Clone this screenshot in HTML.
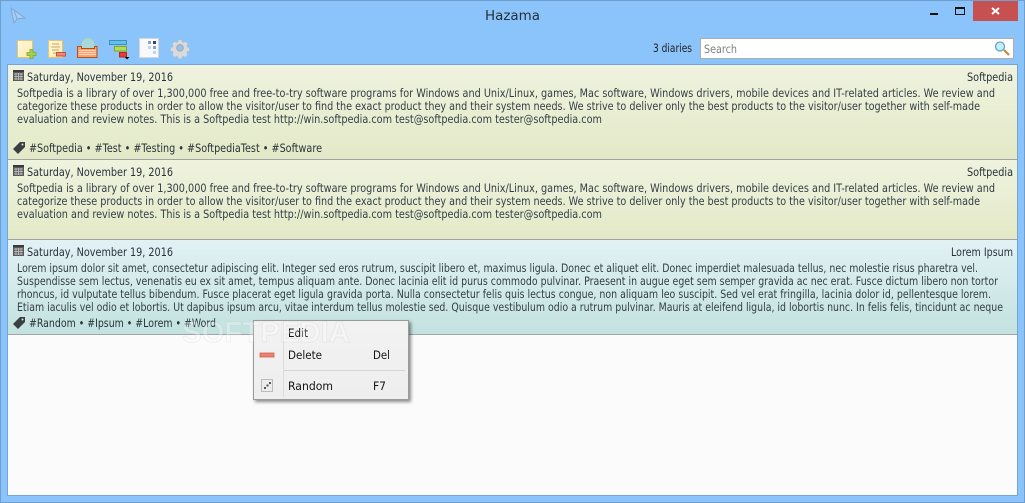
<!DOCTYPE html>
<html><head><meta charset="utf-8"><title>Hazama</title>
<style>
html,body{margin:0;padding:0;background:#8ac4fb;}
svg{display:block;position:absolute;left:0;top:0;}
text{font-family:"DejaVu Sans","Liberation Sans",sans-serif;font-size:11.5px;fill:#333e46;}
.d{fill:#28323a;}
.k{fill:#141414;}
</style></head>
<body>
<svg width="1025" height="503" viewBox="0 0 1025 503" xmlns="http://www.w3.org/2000/svg">
<defs>
<linearGradient id="g1" x1="0" y1="0" x2="0" y2="1"><stop offset="0" stop-color="#eff3df"/><stop offset="1" stop-color="#e3e9c7"/></linearGradient>
<linearGradient id="g2" x1="0" y1="0" x2="0" y2="1"><stop offset="0" stop-color="#e2f1f5"/><stop offset="1" stop-color="#c2e2df"/></linearGradient>
<linearGradient id="note" x1="0" y1="0" x2="1" y2="1"><stop offset="0" stop-color="#fff8e0"/><stop offset="1" stop-color="#fde9a8"/></linearGradient>
<linearGradient id="menu" x1="0" y1="0" x2="0" y2="1"><stop offset="0" stop-color="#f2f2f2"/><stop offset="1" stop-color="#eeeeee"/></linearGradient>
<filter id="sh" x="-10%" y="-10%" width="125%" height="125%"><feDropShadow dx="2" dy="2" stdDeviation="1.5" flood-color="#000" flood-opacity=".45"/></filter>
</defs>
<rect width="1025" height="503" fill="#8ac4fb"/>
<rect x=".5" y=".5" width="1024" height="502" fill="none" stroke="#6f9fcf"/>

<!-- title bar -->
<path d="M11 8 L25 18 L17 19 L14 23 Z" fill="#a9cdf0" stroke="#7fa8d2" stroke-width="1"/>
<path d="M14 10 L17 19" stroke="#7fa8d2" fill="none"/>
<text x="485" y="20" textLength="55" lengthAdjust="spacingAndGlyphs" style="font-size:13px;fill:#26303a">Hazama</text>
<rect x="930" y="13" width="8" height="2" fill="#111"/>
<rect x="955.5" y="7.5" width="9" height="7" fill="none" stroke="#111"/><rect x="955" y="7" width="10" height="2" fill="#111"/>
<rect x="973" y="1" width="45" height="20" fill="#c75050"/>
<path d="M992 8 L999 14 M999 8 L992 14" stroke="#fff" stroke-width="2"/>

<!-- toolbar -->
<rect x="17.5" y="40.5" width="15" height="17" fill="url(#note)" stroke="#e8c566"/>
<path d="M30 49.500h3v3h3v3h-3v3h-3v-3h-3v-3h3z" fill="#a8d050" stroke="#7ea52a" stroke-width=".8"/>
<rect x="48.5" y="40.5" width="14" height="17" fill="url(#note)" stroke="#e8c566"/>
<path d="M52 44h7M51 47h9M52 50h7M53 53h4" stroke="#c4a868" fill="none"/>
<rect x="56.5" y="52.5" width="9" height="3.5" fill="#ee8878" stroke="#c84f3f"/>
<path d="M81 46a6.500 8 0 0 1 14 0v3H81z" fill="#a8d8d8" stroke="#8cc0c2" stroke-width=".5"/>
<path d="M77.500 46.500h4v2h13v-2h2.500v11H77.500z" fill="#f4a070" stroke="#bd4f14"/>
<path d="M79 50.500h17M79 52.500h17M79 54.500h17" stroke="#fbd6b8" fill="none"/>
<rect x="109.500" y="40.500" width="17" height="4" fill="#64c0e8" stroke="#3e8fb8"/>
<rect x="114.500" y="46.500" width="12" height="4.500" fill="#b4dc58" stroke="#7ea52a"/>
<rect x="119.500" y="52.500" width="7" height="4.500" fill="#ee3a2c" stroke="#b22a1c"/>
<path d="M124.500 57h5l-2.500 2.500z" fill="#111"/>
<rect x="139.500" y="38.500" width="19" height="19" fill="#f8f9fb" stroke="#d4d6de"/>
<rect x="148" y="41" width="3" height="3" fill="#8ea4c4"/><rect x="153" y="41" width="3" height="3" fill="#2f4668"/>
<rect x="148" y="46" width="3" height="3" fill="#c4d4ec"/><rect x="153" y="46" width="3" height="3" fill="#8ea4c4"/>
<rect x="153" y="51" width="3" height="3" fill="#c4d4ec"/>
<g transform="translate(180 48) scale(.8) translate(-179.500 -49)">
<path d="M177.500 39h4l.6 2.500 2 .8 2.300-1.300 2.800 2.800-1.300 2.300.8 2 2.500.6v4l-2.500.6-.8 2 1.300 2.300-2.800 2.800-2.300-1.300-2 .8-.6 2.500h-4l-.6-2.500-2-.8-2.300 1.300-2.800-2.800 1.300-2.300-.8-2-2.500-.6v-4l2.500-.6.8-2-1.300-2.300 2.800-2.800 2.300 1.300 2-.8z" fill="#d8dadc" stroke="#bcbec0" stroke-width=".6"/>
<circle cx="179.500" cy="48.800" r="4" fill="#8ac4fb" stroke="#a8aaac" stroke-width="1.500"/>
</g>

<text class="k" x="653" y="52" textLength="39" lengthAdjust="spacingAndGlyphs" style="fill:#222">3 diaries</text>
<rect x="700" y="38" width="313" height="20" fill="#fff" stroke="#adadad" stroke-width="1" transform="translate(.5 .5)"/>
<text x="704" y="53" textLength="33" lengthAdjust="spacingAndGlyphs" style="fill:#808080">Search</text>
<circle cx="1000" cy="46.500" r="4.500" fill="#c8ecf8" stroke="#5aa6d0" stroke-width="1.300"/>
<path d="M1004 50 L1009 55" stroke="#c88838" stroke-width="2.200"/>

<!-- list -->
<rect x="8" y="65" width="1009" height="430" fill="#fbfbfb"/>
<rect x="8" y="65" width="1009" height="94" fill="url(#g1)"/>
<rect x="8" y="160" width="1009" height="79" fill="url(#g1)"/>
<rect x="8" y="240" width="1009" height="94" fill="url(#g2)"/>
<rect x="8" y="159" width="1009" height="1" fill="#a0a4a4"/>
<rect x="8" y="239" width="1009" height="1" fill="#a0a4a4"/>
<rect x="8" y="334" width="1009" height="1" fill="#a0a4a4"/>
<path d="M7.500 495.500V64.500H1017.500V495.500Z" fill="none" stroke="#72a4d6"/>

<!-- entry 1 -->
<g id="cal1"><rect x="13" y="70" width="11" height="11" fill="#5a5a5a"/><rect x="13" y="70" width="11" height="2" fill="#3a3a3a"/><path d="M14 74h9M14 76.500h9M14 79h9M16 73v7M18.500 73v7M21 73v7" stroke="#c8c8c8" stroke-width=".8" fill="none"/></g>
<text class="d" x="27" y="81" textLength="146" lengthAdjust="spacingAndGlyphs">Saturday, November 19, 2016</text>
<text class="d" x="967" y="81" textLength="46" lengthAdjust="spacingAndGlyphs">Softpedia</text>
<text x="17" y="97" textLength="978" lengthAdjust="spacingAndGlyphs">Softpedia is a library of over 1,300,000 free and free-to-try software programs for Windows and Unix/Linux, games, Mac software, Windows drivers, mobile devices and IT-related articles. We review and</text>
<text x="17" y="110" textLength="963" lengthAdjust="spacingAndGlyphs">categorize these products in order to allow the visitor/user to find the exact product they and their system needs. We strive to deliver only the best products to the visitor/user together with self-made</text>
<text x="17" y="123" textLength="585" lengthAdjust="spacingAndGlyphs">evaluation and review notes. This is a Softpedia test http://win.softpedia.com test@softpedia.com tester@softpedia.com</text>
<path d="M13 149 L20 142 H25 V147 L18 154 Z" fill="#3a3f42"/><circle cx="22.500" cy="144.500" r="1" fill="#e8edd0"/>
<text class="d" x="29" y="152" textLength="293" lengthAdjust="spacingAndGlyphs">#Softpedia • #Test • #Testing • #SoftpediaTest • #Software</text>

<!-- entry 2 -->
<use href="#cal1" y="95"/>
<text class="d" x="27" y="176" textLength="146" lengthAdjust="spacingAndGlyphs">Saturday, November 19, 2016</text>
<text class="d" x="967" y="176" textLength="46" lengthAdjust="spacingAndGlyphs">Softpedia</text>
<text x="17" y="192" textLength="978" lengthAdjust="spacingAndGlyphs">Softpedia is a library of over 1,300,000 free and free-to-try software programs for Windows and Unix/Linux, games, Mac software, Windows drivers, mobile devices and IT-related articles. We review and</text>
<text x="17" y="205" textLength="963" lengthAdjust="spacingAndGlyphs">categorize these products in order to allow the visitor/user to find the exact product they and their system needs. We strive to deliver only the best products to the visitor/user together with self-made</text>
<text x="17" y="218" textLength="585" lengthAdjust="spacingAndGlyphs">evaluation and review notes. This is a Softpedia test http://win.softpedia.com test@softpedia.com tester@softpedia.com</text>

<!-- entry 3 -->
<use href="#cal1" y="175"/>
<text class="d" x="27" y="256" textLength="146" lengthAdjust="spacingAndGlyphs">Saturday, November 19, 2016</text>
<text class="d" x="951" y="256" textLength="62" lengthAdjust="spacingAndGlyphs">Lorem Ipsum</text>
<text x="17" y="272" textLength="961" lengthAdjust="spacingAndGlyphs">Lorem ipsum dolor sit amet, consectetur adipiscing elit. Integer sed eros rutrum, suscipit libero et, maximus ligula. Donec et aliquet elit. Donec imperdiet malesuada tellus, nec molestie risus pharetra vel.</text>
<text x="17" y="285" textLength="981" lengthAdjust="spacingAndGlyphs">Suspendisse sem lectus, venenatis eu ex sit amet, tempus aliquam ante. Donec lacinia elit id purus commodo pulvinar. Praesent in augue eget sem semper gravida ac nec erat. Fusce dictum libero non tortor</text>
<text x="17" y="298" textLength="974" lengthAdjust="spacingAndGlyphs">rhoncus, id vulputate tellus bibendum. Fusce placerat eget ligula gravida porta. Nulla consectetur felis quis lectus congue, non aliquam leo suscipit. Sed vel erat fringilla, lacinia dolor id, pellentesque lorem.</text>
<text x="17" y="311" textLength="986" lengthAdjust="spacingAndGlyphs">Etiam iaculis vel odio et lobortis. Ut dapibus ipsum arcu, vitae interdum tellus molestie sed. Quisque vestibulum odio a rutrum pulvinar. Mauris at eleifend ligula, id lobortis nunc. In felis felis, tincidunt ac neque</text>
<path d="M13 324 L20 317 H25 V322 L18 329 Z" fill="#3a3f42"/><circle cx="22.500" cy="319.500" r="1" fill="#d4ecec"/>
<text class="d" x="29" y="327" textLength="187" lengthAdjust="spacingAndGlyphs">#Random • #Ipsum • #Lorem • #Word</text>

<!-- context menu -->
<rect x="253.500" y="320.500" width="155" height="79" fill="url(#menu)" stroke="#9a9a9a" filter="url(#sh)"/>
<path d="M283.500 322V397" stroke="#dcdcdc"/>
<path d="M284 370.500H405" stroke="#d4d4d4"/>
<text class="k" x="288" y="337" textLength="20" lengthAdjust="spacingAndGlyphs">Edit</text>
<text class="k" x="288" y="359" textLength="34" lengthAdjust="spacingAndGlyphs">Delete</text>
<text class="k" x="373" y="359" textLength="17" lengthAdjust="spacingAndGlyphs">Del</text>
<text class="k" x="288" y="390" textLength="45" lengthAdjust="spacingAndGlyphs">Random</text>
<text class="k" x="373" y="390" textLength="13" lengthAdjust="spacingAndGlyphs">F7</text>
<rect x="260" y="353" width="14" height="4" fill="#ee8070" stroke="#d0604c" stroke-width=".8"/>
<rect x="261.500" y="379.500" width="11" height="12" fill="#ececec" stroke="#bcbcbc"/>
<path d="M264 389h2v-2h-2zM266.500 386.500h2v-2h-2zM269 384h2v-2h-2z" fill="#555"/>

<!-- watermark over everything -->
<text x="182" y="342" textLength="168" lengthAdjust="spacingAndGlyphs" style="font-family:'Liberation Sans',sans-serif;font-size:29px;font-weight:bold;fill:#fff;fill-opacity:.3;stroke:#999;stroke-opacity:.12;stroke-width:1">SOFTPEDIA</text>
</svg>
</body></html>
